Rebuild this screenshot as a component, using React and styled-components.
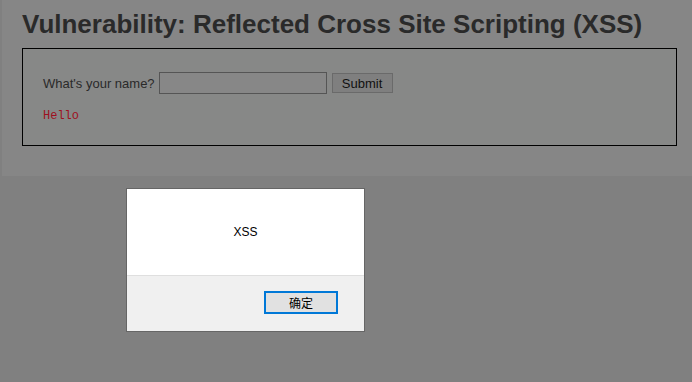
import styled, { createGlobalStyle } from "styled-components"

const GlobalStyle = createGlobalStyle`
    html, body {
        margin: 0;
        padding: 0;
        background: #808080;
        height: 100%;
    }
    #root {
        min-height: 100vh;
    }
`

export default function App() {
    return (
        <>
            <GlobalStyle />
            <Page>
                <Body>
                    <Title>Vulnerability: Reflected Cross Site Scripting (XSS)</Title>
                    <VulnerableCode>
                        <Form>
                            What&#39;s your name?
                            <NameInput type="text" />
                            <SubmitButton>Submit</SubmitButton>
                        </Form>
                        <Output>Hello</Output>
                    </VulnerableCode>
                </Body>
            </Page>
            <Alert>
                <AlertMessage>XSS</AlertMessage>
                <AlertFooter>
                    <OkButton>确定</OkButton>
                </AlertFooter>
            </Alert>
        </>
    )
}

const Page = styled.div`
    padding-left: 2px;
`
const Body = styled.div`
    height: 176px;
    box-sizing: border-box;
    background: #868686;
    padding: 9px 15px 0 20px;
`
const Title = styled.h1`
    margin: 0;
    font-family: 'Liberation Sans', Arial, sans-serif;
    font-weight: 700;
    font-size: 26px;
    line-height: 30px;
    color: #2a2a2a;
`
const VulnerableCode = styled.div`
    margin-top: 9px;
    height: 98px;
    box-sizing: border-box;
    border: 1px solid #000;
    background: #878887;
    padding: 23px 20px 0 20px;
`
const Form = styled.div`
    display: flex;
    align-items: center;
    font-family: 'Liberation Sans', Arial, sans-serif;
    font-size: 13px;
    color: #2a2a2a;
`
const NameInput = styled.input`
    width: 168px;
    height: 22px;
    box-sizing: border-box;
    margin: 0 0 0 4px;
    border: 1px solid #555;
    background: #878787;
    padding: 0;
`
const SubmitButton = styled.button`
    width: 61px;
    height: 20px;
    box-sizing: border-box;
    margin-left: 5px;
    border: 1px solid #6a6a6a;
    background: #7f7f7f;
    font-family: 'Liberation Sans', Arial, sans-serif;
    font-size: 13px;
    color: #111;
    padding: 0;
`
const Output = styled.pre`
    margin: 15px 0 0 0;
    font-family: 'Liberation Mono', 'Courier New', monospace;
    font-size: 12px;
    color: #9e1020;
`
const Alert = styled.div`
    position: absolute;
    left: 126px;
    top: 188px;
    width: 239px;
    height: 144px;
    box-sizing: border-box;
    border: 1px solid #666;
    background: #f0f0f0;
    display: flex;
    flex-direction: column;
`
const AlertMessage = styled.div`
    height: 86px;
    background: #fff;
    border-bottom: 1px solid #dfdfdf;
    display: flex;
    align-items: center;
    justify-content: center;
    font-family: 'Liberation Sans', Arial, 'Noto Sans CJK SC', sans-serif;
    font-size: 12px;
    color: #000;
`
const AlertFooter = styled.div`
    flex: 1;
    display: flex;
    justify-content: flex-end;
    padding: 15px 26px 0 0;
`
const OkButton = styled.button`
    width: 74px;
    height: 23px;
    box-sizing: border-box;
    border: 2px solid #0078d7;
    background: #e1e1e1;
    font-family: 'Noto Sans CJK SC', sans-serif;
    font-size: 12px;
    color: #000;
    padding: 0;
`
